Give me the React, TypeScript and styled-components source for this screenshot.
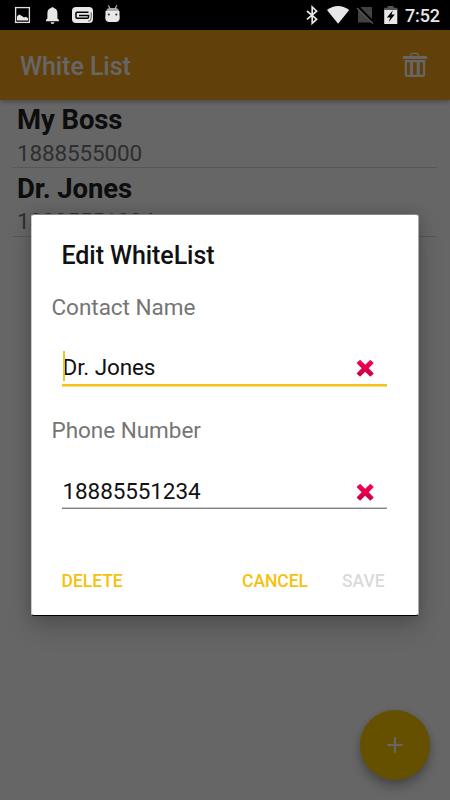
import React from "react";
import styled, { createGlobalStyle } from "styled-components";

const Global = createGlobalStyle`
  * { box-sizing: border-box; }
  body { margin: 0; font-family: Roboto, sans-serif; background: #fff; }
`;

const Screen = styled.div`
  position: relative;
  width: 450px;
  height: 800px;
  overflow: hidden;
  display: flex;
  flex-direction: column;
  background: #fff;
`;

const StatusBar = styled.header`
  height: 30px;
  flex: none;
  display: flex;
  justify-content: space-between;
  background: #000;
  position: relative;
  z-index: 3;
`;

const Clock = styled.time`
  position: absolute;
  right: 10px;
  top: 0;
  font-size: 18px;
  letter-spacing: -0.1px;
  font-weight: 500;
  line-height: 31px;
  color: #e8e8e8;
`;

const Toolbar = styled.div`
  height: 70px;
  flex: none;
  display: flex;
  align-items: center;
  justify-content: space-between;
  padding: 0 22px 0 20px;
  background: #f2a01b;
  box-shadow: 0 1px 5px rgba(0, 0, 0, 0.4);
  z-index: 1;
`;

const ToolbarTitle = styled.h1`
  margin: 0;
  padding-top: 3px;
  font-size: 25px;
  line-height: 30px;
  font-weight: 500;
  letter-spacing: -0.05px;
  color: #fff;
`;

const ContactList = styled.ul`
  list-style: none;
  margin: 0;
  padding: 0 13px 0 12.5px;
`;

const ContactName = styled.div`
  font-size: 27.5px;
  line-height: 32px;
  font-weight: 700;
  letter-spacing: -0.1px;
  color: #222;
`;

const ContactNumber = styled.div`
  font-size: 22.5px;
  line-height: 27px;
  padding-top: 4px;
  letter-spacing: -0.15px;
  color: #757575;
`;

const Contact = styled.li`
  height: 68px;
  padding: 4px 4.5px 0;
  border-bottom: 1px solid #dadada;

  & + & {
    height: 69px;
    padding-top: 5px;
  }

  & + & ${ContactNumber} {
    padding-top: 3px;
  }
`;

const AddButton = styled.button`
  position: absolute;
  right: 20px;
  bottom: 20px;
  width: 70px;
  height: 70px;
  border: 0;
  padding: 0;
  border-radius: 50%;
  display: grid;
  place-items: center;
  background: #fcc800;
  box-shadow: 0 7px 12px rgba(0, 0, 0, 0.28), 0 1px 6px rgba(0, 0, 0, 0.1);
`;

const Scrim = styled.div`
  position: absolute;
  inset: 0;
  z-index: 2;
  background: rgba(0, 0, 0, 0.6);
`;

const Dialog = styled.section`
  position: absolute;
  left: 31px;
  top: 214px;
  width: 388px;
  height: 402px;
  padding: 26px 31px 0 19.5px;
  border-radius: 3px;
  background: #fff;
  border: 1px solid #aaa;
  border-top-color: #888;
  border-bottom-color: #000;
  border-left-color: #ccc;
  box-shadow: 0 12px 24px rgba(0, 0, 0, 0.18), 0 0 14px rgba(0, 0, 0, 0.16);
`;

const DialogTitle = styled.h2`
  margin: 0 0 0 10px;
  height: 53px;
  font-size: 25px;
  line-height: 30px;
  font-weight: 500;
  letter-spacing: -0.07px;
  color: #111;
`;

const Field = styled.label`
  display: block;
  height: 123px;
`;

const FieldLabel = styled.span`
  display: block;
  font-size: 22.5px;
  line-height: 27px;
  letter-spacing: -0.03px;
  color: #757575;
`;

const FieldRow = styled.span<{ $active?: boolean }>`
  position: relative;
  margin: 29px 0 0 10.5px;
  height: 36px;
  display: flex;
  justify-content: space-between;
  padding: ${(p) => (p.$active ? 4.4 : 5)}px 13px 0 0.5px;
  font-size: 22.5px;
  line-height: 27px;
  letter-spacing: -0.1px;
  color: #111;
  border-bottom: ${(p) => (p.$active ? "2px solid #f3c31b" : "1px solid #858585")};
  box-shadow: ${(p) => (p.$active ? "0 1px #f8dd80" : "inset 0 -1px #c8c8c8")};
`;

const Caret = styled.span`
  position: absolute;
  left: 0.5px;
  top: 1px;
  width: 2px;
  height: 30px;
  background: #f3c31b;
`;

const Actions = styled.div`
  display: flex;
  margin: 30px 2.5px 0 10px;
`;

const Action = styled.button<{ $disabled?: boolean; $push?: boolean }>`
  border: 0;
  padding: 0;
  background: none;
  font: 500 17.5px/22px Roboto, sans-serif;
  letter-spacing: -0.04px;
  color: ${(p) => (p.$disabled ? "#dadada" : "#f4c20d")};
  margin-right: ${(p) => (p.$push ? "auto" : "0")};
  & + & { margin-left: 34px; }
`;

const StatusIcons = () => (
  <svg width="450" height="30" viewBox="0 0 450 30" fill="#e8e8e8" aria-hidden="true">
    <rect x="15.6" y="7.6" width="13.8" height="14.8" fill="none" stroke="#e0e0e0" strokeWidth="1.3" />
    <path d="M17 20.5v-4l2-2 3 1.5 2 1.5 1.5-.8L28 18v2.5z" />
    <path d="M46 21.2v-1.4l1.4-1.2v-5.4c0-3 1.4-4.5 3.5-5.1.2-1.1 2.9-1.1 3.1 0 2.1.6 3.4 2.1 3.4 5.1v5.4l1.5 1.2v1.4zM50.5 22.2h4q-.3 1.7-2 1.7t-2-1.7z" />
    <rect x="72" y="7" width="21" height="16" rx="4" />
    <path d="M88.5 12.3H77q-1 0-1 1v3.9q0 1 1 1h10.5q1 0 1-1v-1.7H79" fill="none" stroke="#000" strokeWidth="1.5" />
    <path d="M88 21.3q3.2 0 3.2-3.5v-5.5" fill="none" stroke="#333" strokeWidth=".8" />
    <path d="M105.5 11h14v3.7q1.2 7.3-3.5 7.3h-7q-4.8 0-3.5-7.3z" />
    <path d="M106 11q.8-2.6 3-3l-1.4-2.4 1.2-.4L110.5 8h4.2l1.7-2.9 1.1.4L116.2 8q2.4.5 3 3z" fill="#aaa" />
    <circle cx="108.8" cy="14.5" r="1" fill="#222" />
    <circle cx="116.3" cy="14.5" r="1" fill="#222" />
    <path d="M307 11l9.6 8.2-4.4 4.1V7l4.4 4.1-9.6 8.2" fill="none" stroke="#e8e8e8" strokeWidth="1.7" />
    <path d="M327 10q11-8 22.2 0L338.1 23.8z" />
    <path d="M361.2 7H372v15.6h-14V10.4z" fill="#424242" />
    <path d="M358 7l15.8 16" stroke="#000" strokeWidth="3" />
    <path d="M357 8l16 15.6" stroke="#606060" strokeWidth="1.1" />
    <path d="M384.2 9h13.1v15h-13.1z" />
    <path d="M384.2 10V7.7h3.4V6h6v1.7h3.7V10z" fill="#555" />
    <path d="M392.9 10.3l-6 7.2h3.3l-1.4 4.4 6-7.4h-3.3z" fill="#000" />
  </svg>
);

const TrashIcon = () => (
  <svg width="26" height="26" viewBox="0 0 26 26" fill="none" stroke="#fff" aria-hidden="true">
    <path d="M9 4V2.4q0-1 1-1h5q1 0 1 1V4" strokeWidth="1.2" />
    <path d="M1 5.4h24" strokeWidth="3" />
    <path d="M3.9 9.1h18.2v13.8q0 1-1 1H4.9q-1 0-1-1z" strokeWidth="2.2" />
    <path d="M9.6 9v14M16.2 9v14" strokeWidth="3" />
  </svg>
);

const ClearMark = styled.svg`
  display: block;
  margin-top: 5px;
`;

const ClearIcon = () => (
  <ClearMark width="18" height="18" viewBox="0 0 18 18" aria-hidden="true">
    <defs>
      <linearGradient id="clear" x1="0" y1="0" x2="0" y2="1">
        <stop stopColor="#fa0056" />
        <stop offset="1" stopColor="#cb003e" />
      </linearGradient>
    </defs>
    <path
      transform="translate(.2 .5)"
      d="M3.4.7Q3.9.2 4.4.7L9 5.2 13.6.7q.5-.5 1 0l2.5 2.4q.5.5 0 1L12.5 8.7l4.6 4.7q.5.5 0 1l-2.5 2.3q-.5.5-1 0L9 12.2l-4.6 4.5q-.5.5-1 0L.8 14.4q-.5-.5 0-1l4.7-4.7L.8 4.1q-.5-.5 0-1z"
      fill="url(#clear)"
    />
  </ClearMark>
);

const PlusIcon = () => (
  <svg width="16" height="16" viewBox="0 0 16 16" stroke="#fff" strokeWidth="2.2" aria-hidden="true">
    <path d="M8 .3v15.4M.3 8h15.4" />
  </svg>
);

const contacts = [
  { name: "My Boss", number: "1888555000" },
  { name: "Dr. Jones", number: "18885551234" },
];

export default function App() {
  return (
    <Screen>
      <Global />
      <StatusBar>
        <StatusIcons />
        <Clock>7:52</Clock>
      </StatusBar>
      <Toolbar>
        <ToolbarTitle>White List</ToolbarTitle>
        <TrashIcon />
      </Toolbar>
      <ContactList>
        {contacts.map((c) => (
          <Contact key={c.name}>
            <ContactName>{c.name}</ContactName>
            <ContactNumber>{c.number}</ContactNumber>
          </Contact>
        ))}
      </ContactList>
      <AddButton aria-label="Add contact">
        <PlusIcon />
      </AddButton>
      <Scrim>
        <Dialog role="dialog">
          <DialogTitle>Edit WhiteList</DialogTitle>
          <Field>
            <FieldLabel>Contact Name</FieldLabel>
            <FieldRow $active>
              <Caret />
              Dr. Jones
              <ClearIcon />
            </FieldRow>
          </Field>
          <Field>
            <FieldLabel>Phone Number</FieldLabel>
            <FieldRow>
              18885551234
              <ClearIcon />
            </FieldRow>
          </Field>
          <Actions>
            <Action $push>DELETE</Action>
            <Action>CANCEL</Action>
            <Action $disabled>SAVE</Action>
          </Actions>
        </Dialog>
      </Scrim>
    </Screen>
  );
}
